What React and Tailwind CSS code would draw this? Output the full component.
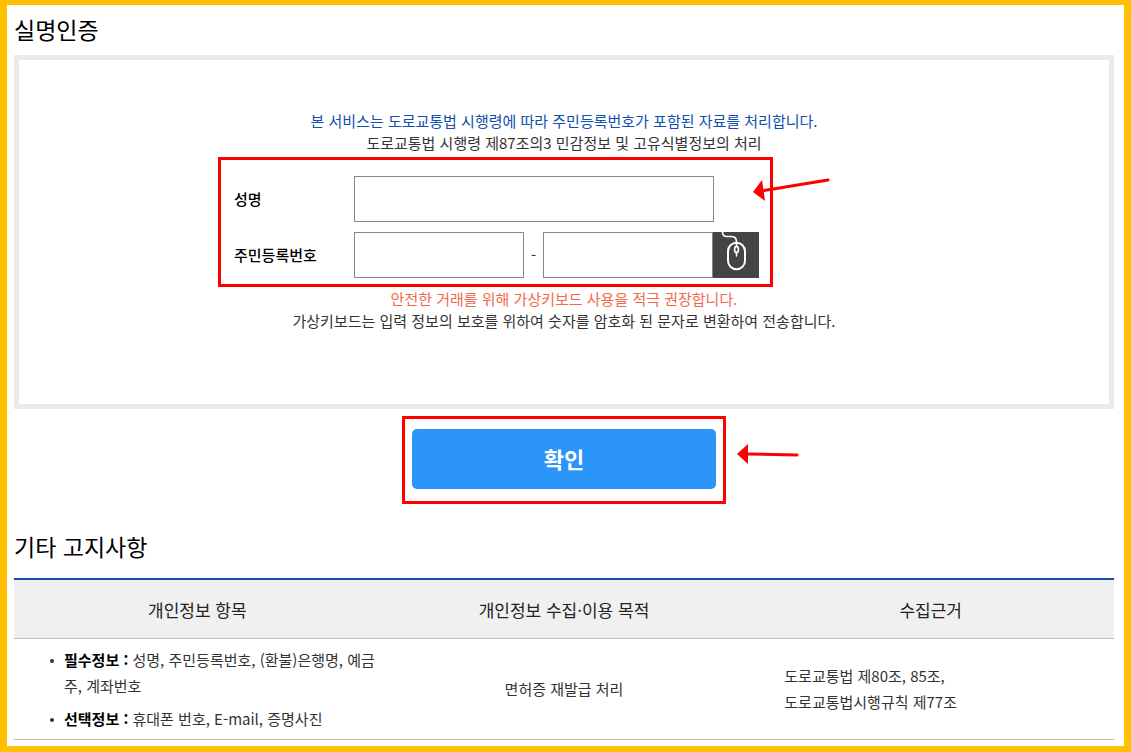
import React, { useState } from 'react';

const noticeHeaders = ['개인정보 항목', '개인정보 수집·이용 목적', '수집근거']

const noticeItems = [
  { label: '필수정보 :', value: '성명, 주민등록번호, (환불)은행명, 예금주, 계좌번호' },
  { label: '선택정보 :', value: '휴대폰 번호, E-mail, 증명사진' },
]

const MouseIcon = () => (
  <svg width="46" height="46" viewBox="0 0 46 46" fill="none" stroke="#fff" strokeLinecap="round">
    <path d="M9.500 0 C9.500 3.500 11.500 4.500 14 4.500 H18.500 C22.500 4.500 23.500 6.500 23.500 10" strokeWidth="1.700" />
    <rect x="15" y="10.800" width="17" height="26.500" rx="8.500" strokeWidth="2" />
    <path d="M23.500 10.500 V14.500 M23.500 20.500 V24" strokeWidth="1.500" />
    <ellipse cx="23.500" cy="17.500" rx="1.900" ry="3.200" strokeWidth="1.700" />
  </svg>
)

const RealNameForm = () => {
  const [name, setName] = useState('')
  const [front, setFront] = useState('')
  const [back, setBack] = useState('')

  return (
    <div className="relative mx-auto mt-[3px] mb-px w-[692px]">
      <div className="flex w-[555px] flex-col gap-2.5 border-3 border-[#ff0000] pt-4 pb-1.5 pl-[13px]">
        <div className="flex items-center">
          <label htmlFor="name" className="w-[120px] font-medium text-black">성명</label>
          <input
            id="name"
            type="text"
            value={name}
            onChange={(e) => setName(e.target.value)}
            className="h-[46px] w-[360px] border border-[#888] px-3"
          />
        </div>
        <div className="flex items-center">
          <label htmlFor="front" className="w-[120px] font-medium text-black">주민등록번호</label>
          <input
            id="front"
            type="text"
            maxLength={6}
            value={front}
            onChange={(e) => setFront(e.target.value)}
            className="h-[46px] w-[170px] border border-[#888] px-3"
          />
          <span className="w-[19px] text-center">-</span>
          <input
            type="password"
            aria-label="주민등록번호 뒷자리"
            maxLength={7}
            value={back}
            onChange={(e) => setBack(e.target.value)}
            className="h-[46px] w-[170px] border border-[#888] px-3"
          />
          <button type="button" aria-label="가상키보드" className="bg-[#444]">
            <MouseIcon />
          </button>
        </div>
      </div>
      <svg className="absolute top-5 left-[534px]" width="80" height="26" viewBox="0 0 80 26">
        <path d="M76 3 L12 13.500" stroke="#ff0000" strokeWidth="3" strokeLinecap="round" />
        <path d="M1 15 L10 3 L13 24 Z" fill="#ff0000" />
      </svg>
    </div>
  )
}

const NoticeTable = () => (
  <table className="mt-[17px] w-full table-fixed border-separate border-spacing-0 border-t-2 border-[#0f4fae]">
    <thead>
      <tr className="bg-[#f0f0f0]">
        {noticeHeaders.map((header) => (
          <th key={header} scope="col" className="h-[59px] border-b border-[#bfbfbf] pt-0.5 text-[17px] font-normal text-[#222]">
            {header}
          </th>
        ))}
      </tr>
    </thead>
    <tbody className="leading-[26px]">
      <tr>
        <td className="border-b border-[#bfbfbf] pt-2 pb-[7px] pl-9">
          <ul className="flex flex-col gap-[7px]">
            {noticeItems.map((item) => (
              <li key={item.label} className="flex break-all">
                <span className="mt-3 mr-2.5 h-1 w-1 shrink-0 rounded-full bg-[#333]" />
                <span><strong className="font-bold text-black">{item.label}</strong> {item.value}</span>
              </li>
            ))}
          </ul>
        </td>
        <td className="border-b border-[#bfbfbf] text-center">면허증 재발급 처리</td>
        <td className="border-b border-[#bfbfbf] pl-[37px]">
          도로교통법 제80조, 85조,<br />
          도로교통법시행규칙 제77조
        </td>
      </tr>
    </tbody>
  </table>
)

const App = () => {
  return (
    <main
      lang="ko"
      className="min-h-screen border-x-7 border-t-5 border-b-6 border-[#ffc000] bg-white pr-2.5 pb-1.5 pl-[7px] font-['Noto_Sans_CJK_KR',sans-serif] text-[15px] leading-[22px] text-[#333]"
    >
      <h1 className="pt-[9px] pb-[11px] text-[23px] leading-[30px] text-black">실명인증</h1>
      <section className="border-5 border-[#ebebeb] pt-[50px] pb-[72px] text-center">
        <p className="text-[#0f4fae]">본 서비스는 도로교통법 시행령에 따라 주민등록번호가 포함된 자료를 처리합니다.</p>
        <p>도로교통법 시행령 제87조의3 민감정보 및 고유식별정보의 처리</p>
        <div className="text-left">
          <RealNameForm />
        </div>
        <p className="text-[#f2694a]">안전한 거래를 위해 가상키보드 사용을 적극 권장합니다.</p>
        <p>가상키보드는 입력 정보의 보호를 위하여 숫자를 암호화 된 문자로 변환하여 전송합니다.</p>
      </section>
      <div className="relative mx-auto mt-[7px] w-[324px] border-3 border-[#ff0000] px-[7px] pt-2.5 pb-3">
        <button type="button" className="block h-[60px] w-full rounded-[5px] bg-[#2a94f8] pb-0.5 text-[22px] font-bold text-white">
          확인
        </button>
        <svg className="absolute top-6 left-[332px]" width="64" height="24" viewBox="0 0 64 24">
          <path d="M60 12 L10 11" stroke="#ff0000" strokeWidth="3" strokeLinecap="round" />
          <path d="M0 11 L11 1 V21 Z" fill="#ff0000" />
        </svg>
      </div>
      <h2 className="pt-[27px] text-[23px] leading-[30px] text-black">기타 고지사항</h2>
      <NoticeTable />
    </main>
  )
}

export default App
